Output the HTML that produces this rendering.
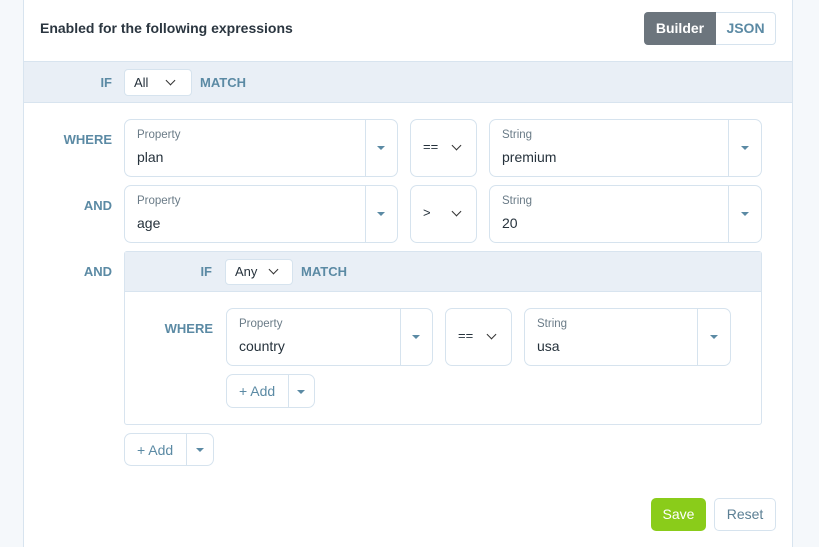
<!DOCTYPE html>
<html><head><style>
*{box-sizing:border-box;margin:0;padding:0}
html,body{width:819px;height:547px;overflow:hidden}
body{background:#f5f8fb;font-family:"Liberation Sans",sans-serif;position:relative}
.a{position:absolute}
.panel{left:23px;top:0;width:770px;height:547px;background:#fff;border-left:1px solid #d8e4ef;border-right:1px solid #d8e4ef}
.box{position:absolute;background:#fff;border:1px solid #d6e3ee;border-radius:7px}
.lbl{position:absolute;color:#5b8aa4;font-size:13px;font-weight:bold;text-align:right}
.sm{position:absolute;font-size:11.5px;color:#6a7b87}
.val{position:absolute;font-size:14px;color:#26323c}
.div{position:absolute;top:0;bottom:0;width:1px;background:#d6e3ee}
.tri{position:absolute;width:0;height:0;border-left:4px solid transparent;border-right:4px solid transparent;border-top:4px solid #5b8aa4}
.chev{position:absolute;width:7px;height:7px;border-right:1.6px solid #333;border-bottom:1.6px solid #333;transform:rotate(45deg)}
</style></head><body>
<div class="a panel"></div>
<div class="a" style="left:40px;top:20px;font-size:14px;font-weight:bold;color:#2b3640">Enabled for the following expressions</div>
<div class="a" style="left:644px;top:12px;width:132px;height:33px;border:1px solid #d6e3ee;border-radius:4px;background:#fff"></div>
<div class="a" style="left:644px;top:12px;width:72px;height:33px;background:#6c757d;border-radius:4px 0 0 4px;color:#fff;font-size:14px;font-weight:bold;text-align:center;line-height:33px">Builder</div>
<div class="a" style="left:716px;top:12px;width:59px;height:33px;color:#5b8aa4;font-size:14px;font-weight:bold;text-align:center;line-height:33px">JSON</div>

<div class="a" style="left:24px;top:61px;width:768px;height:42px;background:#e9eff6;border-top:1px solid #d8e4ef;border-bottom:1px solid #d8e4ef"></div>
<div class="lbl" style="left:60px;width:52px;top:75px">IF</div>
<div class="box" style="left:124px;top:69px;width:68px;height:27px;border-radius:4px"><span class="val" style="left:9px;top:5px;font-size:13px">All</span><span class="chev" style="left:42px;top:7px"></span></div>
<div class="lbl" style="left:200px;top:75px;text-align:left">MATCH</div>

<div class="lbl" style="left:40px;width:72px;top:132px">WHERE</div>
<div class="box" style="left:124px;top:119px;width:274px;height:58px"><span class="sm" style="left:12px;top:9px">Property</span><span class="val" style="left:12px;top:29px">plan</span><div class="div" style="left:240px"></div><span class="tri" style="left:252px;top:26px"></span></div>
<div class="box" style="left:410px;top:119px;width:67px;height:58px"><span class="val" style="left:12px;top:19px;font-size:13px">==</span><span class="chev" style="left:42px;top:22px"></span></div>
<div class="box" style="left:489px;top:119px;width:273px;height:58px"><span class="sm" style="left:12px;top:9px">String</span><span class="val" style="left:12px;top:29px">premium</span><div class="div" style="left:238px"></div><span class="tri" style="left:251px;top:26px"></span></div>

<div class="lbl" style="left:40px;width:72px;top:198px">AND</div>
<div class="box" style="left:124px;top:185px;width:274px;height:58px"><span class="sm" style="left:12px;top:9px">Property</span><span class="val" style="left:12px;top:29px">age</span><div class="div" style="left:240px"></div><span class="tri" style="left:252px;top:26px"></span></div>
<div class="box" style="left:410px;top:185px;width:67px;height:58px"><span class="val" style="left:12px;top:19px;font-size:13px">&gt;</span><span class="chev" style="left:42px;top:22px"></span></div>
<div class="box" style="left:489px;top:185px;width:273px;height:58px"><span class="sm" style="left:12px;top:9px">String</span><span class="val" style="left:12px;top:29px">20</span><div class="div" style="left:238px"></div><span class="tri" style="left:251px;top:26px"></span></div>

<div class="lbl" style="left:40px;width:72px;top:264px">AND</div>
<div class="a" style="left:124px;top:251px;width:638px;height:174px;border:1px solid #d8e4ef;border-radius:3px;background:#fff"></div>
<div class="a" style="left:125px;top:252px;width:636px;height:40px;background:#e9eff6;border-bottom:1px solid #d8e4ef"></div>
<div class="lbl" style="left:160px;width:52px;top:264px">IF</div>
<div class="box" style="left:225px;top:259px;width:68px;height:26px;border-radius:4px"><span class="val" style="left:9px;top:4px;font-size:13px">Any</span><span class="chev" style="left:44px;top:6px"></span></div>
<div class="lbl" style="left:301px;top:264px;text-align:left">MATCH</div>

<div class="lbl" style="left:140px;width:73px;top:321px">WHERE</div>
<div class="box" style="left:226px;top:308px;width:207px;height:58px"><span class="sm" style="left:12px;top:9px">Property</span><span class="val" style="left:12px;top:29px">country</span><div class="div" style="left:173px"></div><span class="tri" style="left:185px;top:26px"></span></div>
<div class="box" style="left:445px;top:308px;width:67px;height:58px"><span class="val" style="left:12px;top:19px;font-size:13px">==</span><span class="chev" style="left:42px;top:22px"></span></div>
<div class="box" style="left:524px;top:308px;width:207px;height:58px"><span class="sm" style="left:12px;top:9px">String</span><span class="val" style="left:12px;top:29px">usa</span><div class="div" style="left:172px"></div><span class="tri" style="left:185px;top:26px"></span></div>

<div class="box" style="left:226px;top:374px;width:89px;height:34px"><span class="val" style="left:12px;top:8px;color:#5b8aa4">+ Add</span><div class="div" style="left:61px"></div><span class="tri" style="left:70px;top:15px"></span></div>
<div class="box" style="left:124px;top:433px;width:90px;height:33px"><span class="val" style="left:12px;top:8px;color:#5b8aa4">+ Add</span><div class="div" style="left:61px"></div><span class="tri" style="left:71px;top:14px"></span></div>

<div class="a" style="left:651px;top:498px;width:55px;height:33px;background:#8acc1a;border-radius:5px;color:#fff;font-size:14px;text-align:center;line-height:33px">Save</div>
<div class="a" style="left:714px;top:498px;width:62px;height:33px;border:1px solid #d6e3ee;border-radius:5px;color:#5b7f94;font-size:14px;text-align:center;line-height:31px">Reset</div>
</body></html>
